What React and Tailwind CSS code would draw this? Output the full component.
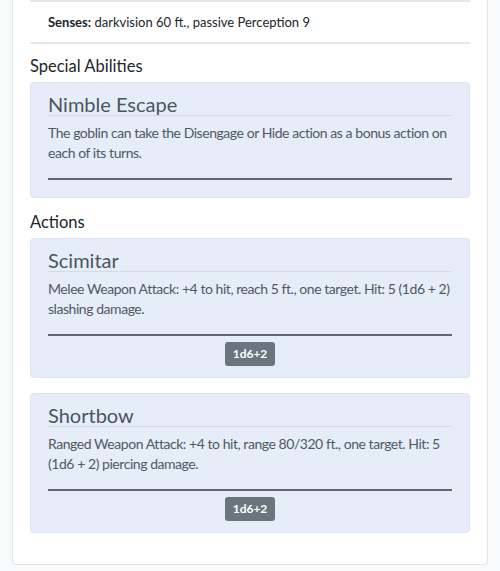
export default function App() {
  const font = { fontFamily: 'Lato, "Noto Sans", sans-serif' };
  const Block = ({ title, text, badge }) => (
    <div className={`rounded-[4px] border border-[#dbe4f1] bg-[#e6edf8] px-[17px] ${badge ? "pt-[9px] pb-[11px]" : "pt-[9px] pb-[17px]"}`}>
      <div className="h-[24px] border-b border-[#d3dae4] text-[20px] leading-[24px] text-[#4a5562]">{title}</div>
      <div className="mt-[7px] text-[14px] leading-[20px] tracking-[-0.45px] text-[#4f5964]">{text}</div>
      <div className="mt-[15px] h-[2px] bg-[#5f666d]" />
      {badge && (
        <div className="mt-[6px] flex justify-center">
          <span className="rounded-[3px] bg-[#6c757d] px-[8px] text-[12px] font-bold leading-[24px] text-white">{badge}</span>
        </div>
      )}
    </div>
  );
  return (
    <div className="min-h-[571px] bg-[#f8f9fa] px-[12px]" style={font}>
      <div className="rounded-b-[4px] border border-t-0 border-[#e3e5e7] bg-white px-[17px] pb-[31px]">
        <div className="h-[2px] bg-[#e4e6e8]" />
        <div className="h-[40px] pl-[18px] text-[13px] leading-[40px] text-[#212529]">
          <b>Senses:</b> darkvision 60 ft., passive Perception 9
        </div>
        <div className="h-[2px] bg-[#e4e6e8]" />
        <div className="mt-[11px] text-[16.5px] leading-[22px] text-[#212529]">Special Abilities</div>
        <div className="mt-[5px]">
          <Block title="Nimble Escape" text="The goblin can take the Disengage or Hide action as a bonus action on each of its turns." />
        </div>
        <div className="mt-[13px] text-[16.5px] leading-[22px] text-[#212529]">Actions</div>
        <div className="mt-[5px] flex flex-col gap-[15px]">
          <Block title="Scimitar" text="Melee Weapon Attack: +4 to hit, reach 5 ft., one target. Hit: 5 (1d6 + 2) slashing damage." badge="1d6+2" />
          <Block title="Shortbow" text="Ranged Weapon Attack: +4 to hit, range 80/320 ft., one target. Hit: 5 (1d6 + 2) piercing damage." badge="1d6+2" />
        </div>
      </div>
    </div>
  );
}
